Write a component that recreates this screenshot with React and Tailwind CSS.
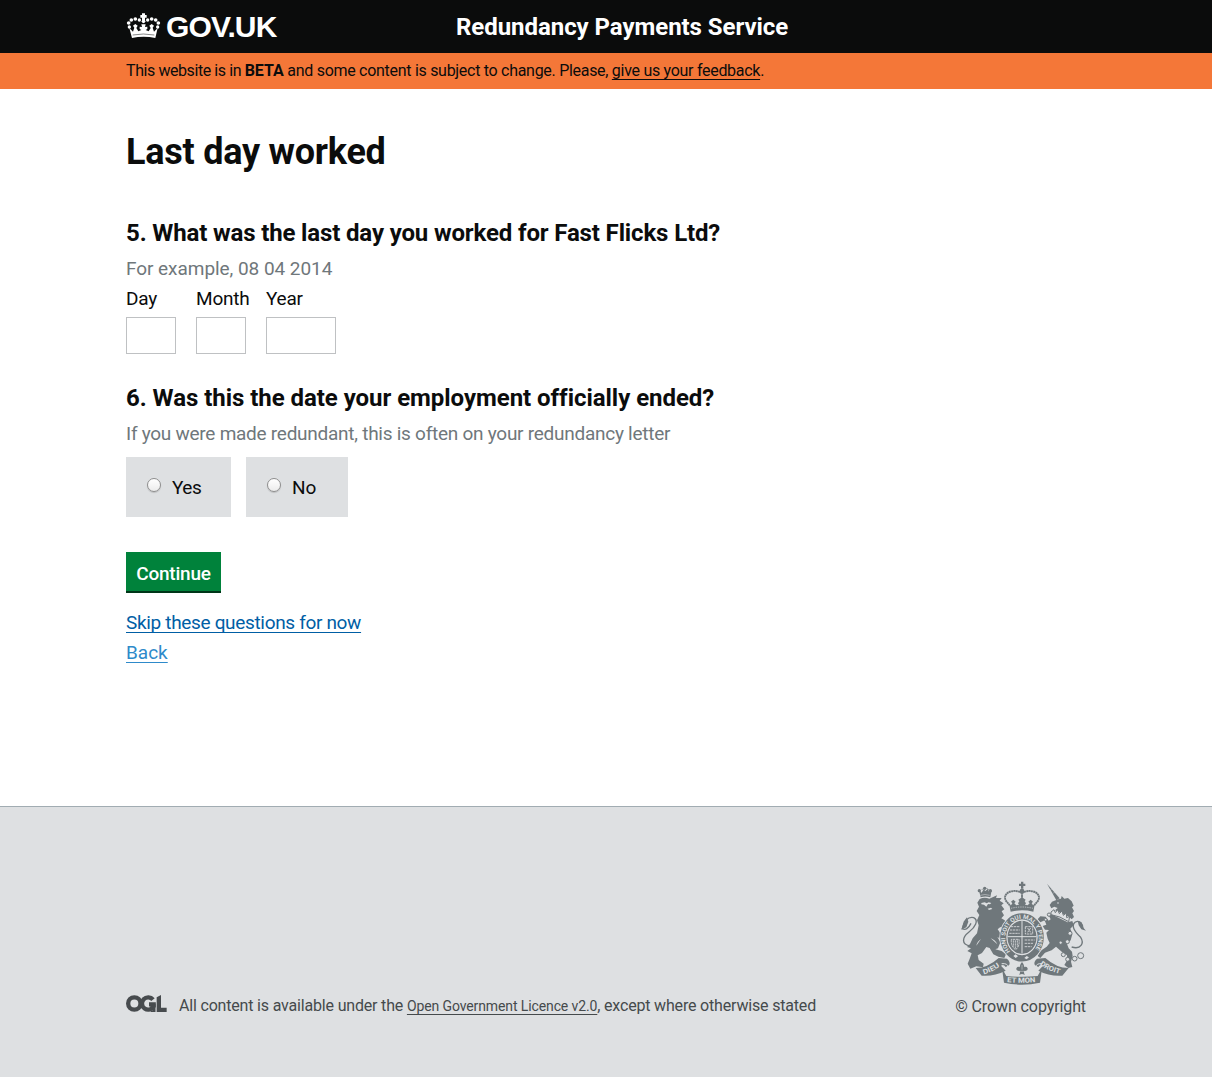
function Crown() {
  return (
    <svg className="h-[26px] w-[35px]" viewBox="17 23 105 78" fill="#fff">
      <path d="M65 24h9v5h5v8h-5v7h-9v-7h-5v-8h5z" />
      <circle cx="69.500" cy="48" r="5.500" />
      <circle cx="57" cy="44" r="5" />
      <circle cx="45" cy="41" r="5.500" />
      <circle cx="33" cy="44" r="5.500" />
      <circle cx="25" cy="53" r="5.500" />
      <circle cx="27" cy="65" r="5" />
      <circle cx="82" cy="44" r="5" />
      <circle cx="94" cy="41" r="5.500" />
      <circle cx="106" cy="44" r="5.500" />
      <circle cx="114" cy="53" r="5.500" />
      <circle cx="112" cy="65" r="5" />
      <path d="M27 68l11 11 4-12-4-6 7-5 7 5-4 7 6 10 9-4-5-3v-7l7 1-2-8h13l-2 8 7-1v7l-5 3 9 4 6-10-4-7 7-5 7 5-4 6 4 12 11-11-7 30q-35-7-70 0z" />
      <path d="M37 89q32-6 65 0" fill="none" stroke="#0b0c0c" strokeWidth="1.500" />
    </svg>
  );
}

function OglLogo() {
  return (
    <svg className="mt-[4px] h-[17px] w-[41px] shrink-0" viewBox="0 0 123 51" fill="none" stroke="#474b4e">
      <circle cx="25" cy="25.500" r="18.500" strokeWidth="13" />
      <path d="M81 14A18.500 18.500 0 1 0 83 34V28H69" strokeWidth="13" />
      <path d="M84 27v24H74" strokeWidth="9" />
      <path d="M92 7L105 0V38H122V51H92Z" fill="#474b4e" stroke="none" />
    </svg>
  );
}

function RoyalArms() {
  return (
    <svg className="h-[104px] w-[126px]" viewBox="45 33 378 312" fill="#6f777b">
      <defs>
        <path id="garter" d="M196 244A50 57 0 1 1 266 244" />
        <path id="ribbonLeft" d="M116 313Q143 306 170 285" />
        <path id="ribbonMid" d="M186 336Q231 341 277 336" />
        <path id="ribbonRight" d="M284 284Q314 306 352 313" />
      </defs>

      {/* centre crown */}
      <path d="M228 35h7v6h6v7h-6v8h-7v-8h-6v-7h6z" />
      <circle cx="231" cy="63" r="7" />
      <path d="M231 70C213 56 181 64 180 82C180 94 190 98 194 106M231 70C249 56 281 64 282 82C282 94 272 98 268 106M231 68v28" fill="none" stroke="#6f777b" strokeWidth="5.500" strokeDasharray="6 1" />
      <path d="M193 104l5 2 4-6-4-5 7-6 7 6-4 5 6 6 8-2-3-4 4-6-3-5 11-7 11 7-3 5 4 6-3 4 8 2 6-6-4-5 7-6 7 6-4 5 4 6 5-2-4 21q-34-8-68 0z" />
      <path d="M198 115q33-8 66 0" fill="none" stroke="#dee0e2" strokeWidth="2" strokeDasharray="4 3" />

      {/* lion */}
      <path d="M102 62l8 6 6-10 5 5 7-5 5 9 7-6-4 21q-15-5-29 0z" />
      <circle cx="119" cy="55" r="5" />
      <circle cx="103" cy="62" r="5" />
      <circle cx="136" cy="62" r="5" />
      <path d="M111 59l3-3M125 56l6 3" stroke="#6f777b" strokeWidth="3" />
      <path d="M106 76q14-5 28 0" fill="none" stroke="#dee0e2" strokeWidth="1.500" />
      <path d="M104 87Q118 80 133 86L156 76L153 84L170 84L164 92L176 100L169 106L178 118L170 124L177 136L169 145L179 151L184 160L178 178L166 171L158 178L170 196L166 207L157 200L166 217L159 235L151 238L170 243L183 253L178 264L160 260L145 253L134 234L124 231L111 249L98 256L101 270L116 281L114 292L94 289L76 296L68 281L74 266L80 250L67 243L78 235L66 231L75 222L83 205L96 190L101 166L96 151L103 135L95 123L102 110L97 98Z" />
      <path d="M109 99l10-2 6 3 6-3 8 2-4 4-6-1-5 8-7-6-8-1z" fill="#dee0e2" />
      <path d="M128 116l10-3 4 4-10 3zM137 205q14 5 20 18M108 207q-12 8-14 20" fill="#dee0e2" />
      <path d="M76 228C48 224 51 202 72 186C91 171 102 151 86 143C69 139 55 155 52 176Q66 184 78 160" fill="none" stroke="#6f777b" strokeWidth="4" />
      <path d="M49 179l8-25 9-12 4 13-6 17z" />

      {/* unicorn */}
      <path d="M306 41l38 44-10 6z" />
      <path d="M316 60l7-4M323 70l8-4" stroke="#dee0e2" strokeWidth="1" />
      <path d="M314 105L321 95L332 91L339 88L348 86L350 78L358 86L369 84L380 94L386 107L381 112L387 123L382 130L387 141L380 148L372 140L330 121L338 114L328 110L319 115Z" />
      <circle cx="339" cy="99" r="2.500" fill="#dee0e2" />
      <path d="M318 126l9-7 4 9 7-9 5 12 8-8 4 13 9-7 1 14 9-4-3 16q-26-17-53-21z" fill="#dee0e2" stroke="#6f777b" strokeWidth="3" />
      <path d="M322 134L368 157L382 153L386 166L376 176L382 193L377 211L366 222L371 235L381 245L383 258L378 275L382 291L370 294L358 285L367 270L366 256L351 246L333 230L320 241L300 248L286 264L278 258L285 244L305 230L314 219L308 206L304 188L312 180L300 179L293 168L304 164L299 151L286 157L278 148L286 139L302 140L311 152L317 148L311 136Z" />
      <g fill="#dee0e2" stroke="#6f777b" strokeWidth="3">
        <circle cx="312" cy="134" r="5" />
        <circle cx="302" cy="149" r="4" />
        <circle cx="375" cy="190" r="6" />
        <circle cx="367" cy="215" r="6" />
        <circle cx="347" cy="218" r="5" />
        <circle cx="355" cy="254" r="6" />
        <circle cx="368" cy="268" r="6" />
        <circle cx="389" cy="266" r="7" />
        <circle cx="407" cy="257" r="9" />
      </g>
      <path d="M380 231C408 240 418 219 407 202C390 185 376 167 391 156C405 149 415 163 414 177" fill="none" stroke="#6f777b" strokeWidth="4" />
      <path d="M398 152l11 5 6 16 8 9-14-4-8-12z" />

      {/* ribbon */}
      <path d="M92 294Q128 294 161 264L186 266Q198 277 192 286L182 291Q176 282 168 287L182 302Q147 320 110 317Z" />
      <path d="M371 294Q334 294 301 264L276 266Q264 277 270 286L280 291Q286 282 294 287L280 302Q315 320 352 317Z" />
      <path d="M171 295L184 318Q231 323 278 318L291 295L285 338Q231 350 177 338Z" />
      <path d="M170 281q20-2 19 12M292 281q-20-2-19 12" fill="none" stroke="#dee0e2" strokeWidth="3" />

      {/* shield and garter */}
      <ellipse cx="231" cy="202" rx="68" ry="75" fill="#dee0e2" />
      <ellipse cx="231" cy="202" rx="56" ry="63" fill="none" stroke="#6f777b" strokeWidth="19" />
      <ellipse cx="231" cy="202" rx="44" ry="50" />
      <ellipse cx="231" cy="202" rx="45" ry="52" fill="none" stroke="#dee0e2" strokeWidth="2" />
      <path d="M231 153v98M188 200h86" stroke="#dee0e2" strokeWidth="3" />
      <path d="M198 170h26M195 180h29M193 190h31M239 210h30M239 220h26M239 230h21M241 170h22v22h-22zM199 208q-2 22 13 31q13-10 10-31zM205 211v20M211 211v25M217 211v20M248 174l9 13M257 174l-9 13" fill="none" stroke="#dee0e2" strokeWidth="2.500" strokeDasharray="7 2" />
      <text fill="#dee0e2" fontFamily="Roboto, sans-serif" fontWeight="700" fontSize="18">
        <textPath href="#garter" textLength="248" lengthAdjust="spacingAndGlyphs">HONI SOIT QUI MAL Y PENSE</textPath>
      </text>
      <path d="M205 258l7-5 7 6-7 5zM238 264l7-6 7 4-7 6z" fill="#dee0e2" />

      {/* fleur-de-lis */}
      <path d="M231 276q12 13 3 24q2-12 11-9q8 8-4 12l-4 1q-1 6 3 10l-9-2-9 2q4-4 3-10l-4-1q-12-4-4-12q9-3 11 9q-9-11 3-24z" />
      <path d="M220 304h22M231 285v14" stroke="#dee0e2" strokeWidth="1.500" />

      <g fill="#dee0e2" fontFamily="Roboto, sans-serif" fontWeight="700" fontSize="21">
        <text><textPath href="#ribbonLeft" textLength="55" lengthAdjust="spacingAndGlyphs">DIEU</textPath></text>
        <text><textPath href="#ribbonMid" textLength="86" lengthAdjust="spacingAndGlyphs">ET MON</textPath></text>
        <text><textPath href="#ribbonRight" textLength="66" lengthAdjust="spacingAndGlyphs">DROIT</textPath></text>
      </g>
    </svg>
  );
}

function DateField({ label, box }) {
  return (
    <label className="block">
      <span className="block w-0 whitespace-nowrap">{label}</span>
      <input type="text" className={"mt-[3px] block h-[37px] border border-[#bfc1c3] bg-white " + box} />
    </label>
  );
}

function RadioOption({ label, box }) {
  return (
    <label className={"flex h-[60px] items-center bg-[#dee0e2] pl-[21px] " + box}>
      <input
        type="radio"
        name="ended"
        className="mb-1 size-[14px] appearance-none rounded-full border border-[#8e8e8e] bg-linear-to-b from-white to-[#ececec] shadow-[0_1px_1px_rgba(0,0,0,0.15)]"
      />
      <span className="ml-[11px] pt-[2px]">{label}</span>
    </label>
  );
}

const LINK = "underline decoration-1 underline-offset-[3px] [text-decoration-skip-ink:none]";

export default function App() {
  return (
    <div className="flex min-h-[1077px] flex-col bg-white font-['Roboto',sans-serif] text-[19px] leading-[30px] text-[#0b0c0c]">
      <header className="h-[53px] bg-[#0b0c0c] text-white">
        <div className="mx-auto flex w-[960px]">
          <div className="flex w-[330px] gap-[5px]">
            <div className="pt-[13px]"><Crown /></div>
            <span className="font-['Liberation_Sans',sans-serif] text-[30px] leading-[54px] font-bold tracking-[-0.85px]">GOV.UK</span>
          </div>
          <span className="text-[24px] leading-[54px] font-bold tracking-[-0.05px]">Redundancy Payments Service</span>
        </div>
      </header>

      <div className="h-[36px] bg-[#f47738]">
        <p className="mx-auto w-[960px] text-[16px] leading-[36px] tracking-[-0.29px]">
          <span className="tracking-[-0.42px]">This website is in </span>
          <strong className="font-bold tracking-[-0.05px]">BETA</strong> and some content is subject to change. Please,{" "}
          <a href="#" className={LINK}>give us your feedback</a>.
        </p>
      </div>

      <main className="mx-auto w-[960px] flex-1 pt-[43px]">
        <h1 className="text-[36px] leading-[40px] font-bold tracking-[-0.24px]">Last day worked</h1>

        <h2 className="mt-[46px] text-[24px] font-bold tracking-[-0.14px]">5. What was the last day you worked for Fast Flicks Ltd?</h2>
        <p className="mt-[6px] tracking-[-0.05px] text-[#6f777b]">For example, 08 04 2014</p>
        <div className="flex gap-5 tracking-[-0.2px]">
          <DateField label="Day" box="w-[50px]" />
          <DateField label="Month" box="w-[50px]" />
          <DateField label="Year" box="w-[70px]" />
        </div>

        <h2 className="mt-[29px] text-[24px] font-bold tracking-[-0.04px]">6. Was this the date your employment officially ended?</h2>
        <p className="mt-[6px] tracking-[-0.26px] text-[#6f777b]">If you were made redundant, this is often on your redundancy letter</p>
        <div className="mt-2 flex gap-[15px] tracking-[-0.5px]">
          <RadioOption label="Yes" box="w-[105px]" />
          <RadioOption label="No" box="w-[102px] tracking-normal" />
        </div>

        <button className="mt-[35px] block h-[41px] w-[95px] border-b-2 border-[#003618] bg-[#00823b] pt-[5px] text-[19px] leading-[34px] font-medium tracking-[-0.2px] text-white">
          Continue
        </button>
        <div className="mt-[15px] flex flex-col items-start">
          <a href="#" className={LINK + " tracking-[-0.33px] text-[#005ea5]"}>Skip these questions for now</a>
          <a href="#" className={LINK + " text-[#2e8aca]"}>Back</a>
        </div>
      </main>

      <footer className="h-[271px] border-t border-[#a1acb2] bg-[#dee0e2] text-[16px] text-[#454a4c]">
        <div className="mx-auto flex w-[960px] items-end justify-between pt-[74px]">
          <div className="flex">
            <OglLogo />
            <p className="ml-3 whitespace-nowrap tracking-[-0.18px]">
              All content is available under the{" "}
              <a href="#" className={LINK + " text-[14px] tracking-[-0.11px]"}>Open Government Licence v2.0</a>
              , except where otherwise stated
            </p>
          </div>
          <div className="flex flex-col items-end">
            <RoyalArms />
            <span className="mt-[7px] -mb-px tracking-[-0.1px]">© Crown copyright</span>
          </div>
        </div>
      </footer>
    </div>
  );
}
